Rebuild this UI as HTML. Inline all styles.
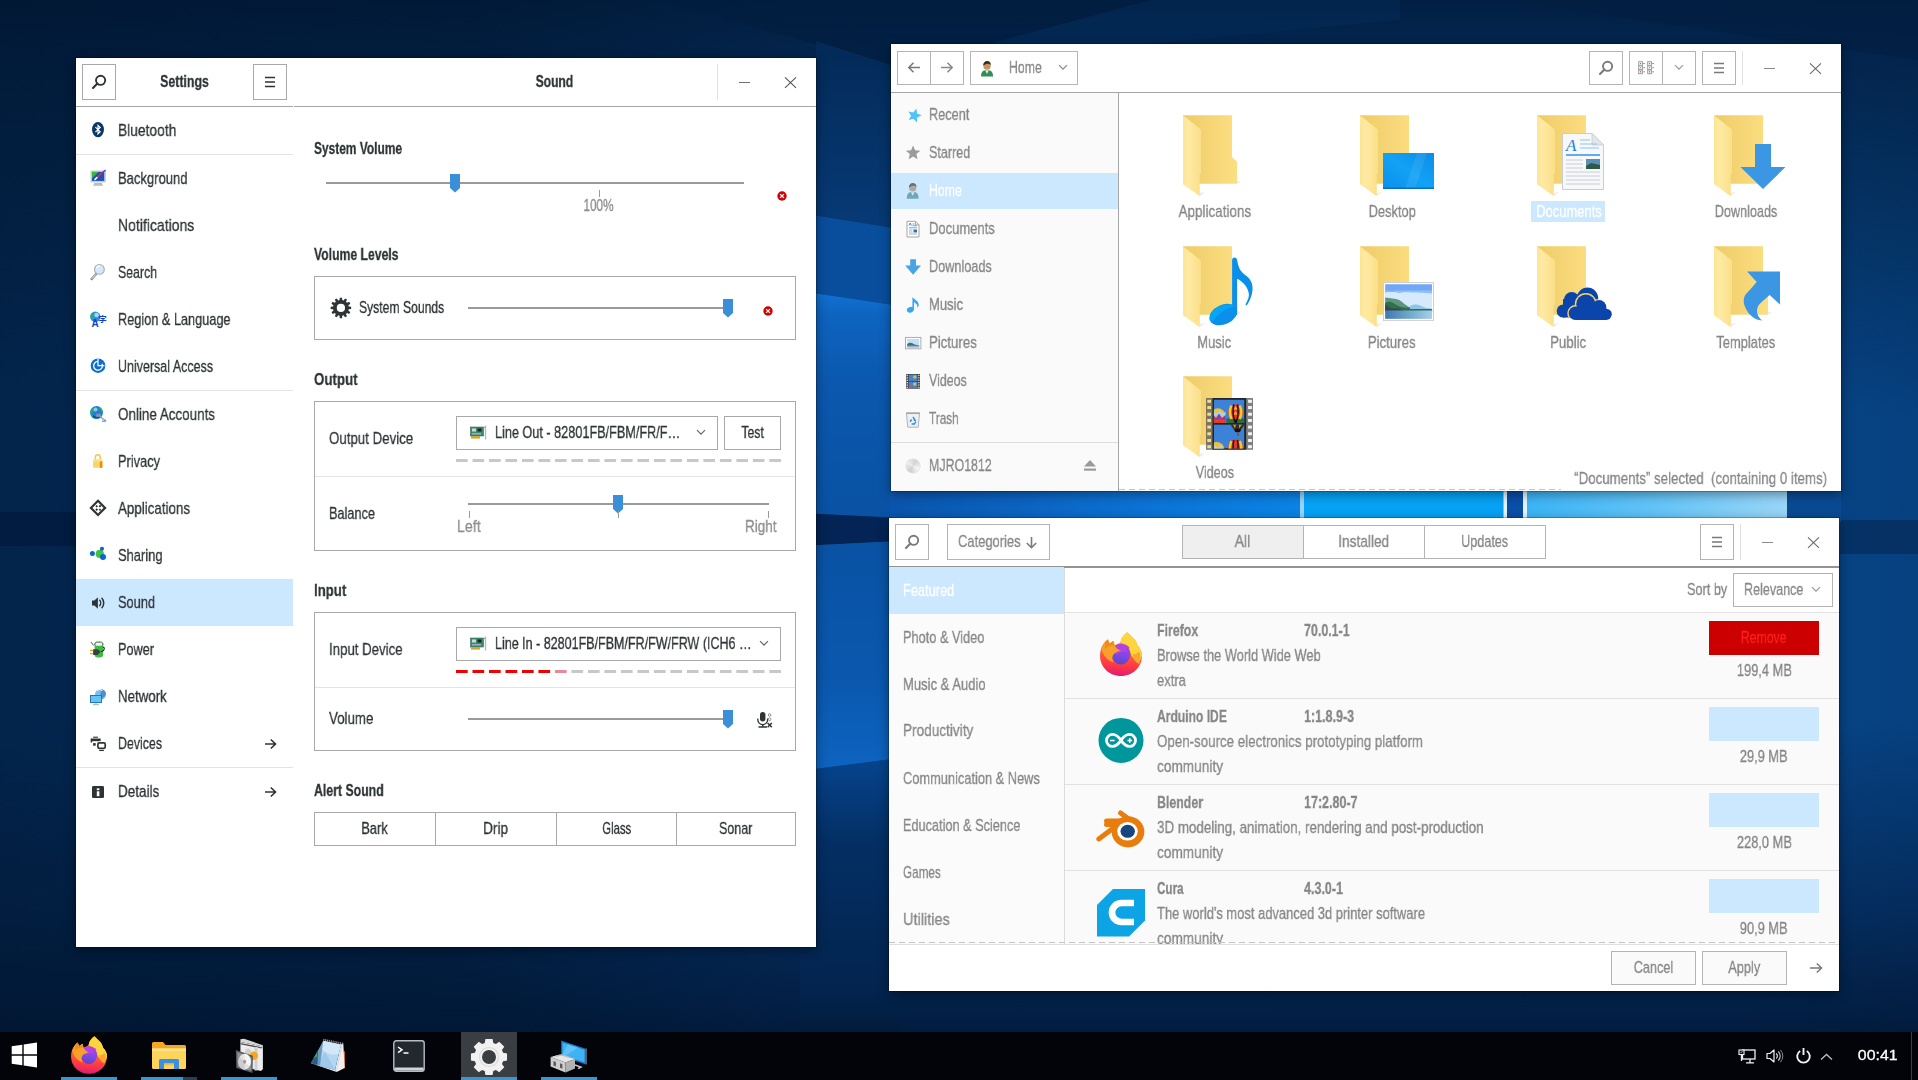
<!DOCTYPE html>
<html><head><meta charset="utf-8"><title>Desktop</title>
<style>
html,body{margin:0;padding:0;}
body{width:1918px;height:1080px;overflow:hidden;position:relative;font-family:"Liberation Sans",sans-serif;
background:#04244a;}
div,svg,span.t{position:absolute;box-sizing:border-box;}
span.t{will-change:transform;-webkit-text-stroke:.3px;white-space:pre;line-height:20px;display:block;}
.win{background:#fff;box-shadow:0 0 0 1px rgba(0,0,0,.22),0 3px 11px rgba(0,0,0,.42);}
.btn{border:1px solid #a9a9a9;background:#fff;}
.btng{border:1px solid #b4b4b4;background:#fff;}
.hl{background:#cce8ff;}
</style></head><body>

<svg style="left:0;top:0" width="1918" height="1032" viewBox="0 0 1918 1032"><defs><linearGradient id="wv" x1="0" y1="0" x2="0" y2="1"><stop offset="0" stop-color="#021f43"/><stop offset=".05" stop-color="#03264f"/><stop offset=".2" stop-color="#043466"/><stop offset=".4" stop-color="#07468a"/><stop offset=".7" stop-color="#07468a"/><stop offset=".88" stop-color="#042f62"/><stop offset="1" stop-color="#021c3f"/></linearGradient><linearGradient id="wl" x1="0" y1="0" x2="1" y2="0"><stop offset="0" stop-color="#01152f" stop-opacity=".68"/><stop offset=".25" stop-color="#01152f" stop-opacity=".56"/><stop offset=".45" stop-color="#01152f" stop-opacity="0"/><stop offset=".9" stop-color="#01152f" stop-opacity="0"/><stop offset="1" stop-color="#01152f" stop-opacity=".12"/></linearGradient><linearGradient id="g1" x1="0" y1="0" x2="0" y2="1"><stop offset="0" stop-color="#1272d4"/><stop offset=".1" stop-color="#0e64c0"/><stop offset=".4" stop-color="#0b58ae"/><stop offset="1" stop-color="#0952a4"/></linearGradient><linearGradient id="g2" x1="0" y1="0" x2="0" y2="1"><stop offset="0" stop-color="#0952a4"/><stop offset=".6" stop-color="#0a58ae"/><stop offset="1" stop-color="#0d64c0"/></linearGradient><linearGradient id="g3" x1="0" y1="0" x2="0" y2="1"><stop offset="0" stop-color="#06448e"/><stop offset=".3" stop-color="#042f64"/><stop offset=".85" stop-color="#03244e"/><stop offset="1" stop-color="#021b3b"/></linearGradient><linearGradient id="g0" x1="0" y1="0" x2="0" y2="1"><stop offset="0" stop-color="#032a57"/><stop offset="1" stop-color="#073a76"/></linearGradient><linearGradient id="s1" x1="0" y1="0" x2="1" y2="0"><stop offset="0" stop-color="#0a55ad"/><stop offset=".3" stop-color="#0b63c0"/><stop offset=".65" stop-color="#0c74d6"/><stop offset="1" stop-color="#0a84e6"/></linearGradient><linearGradient id="s2" x1="0" y1="0" x2="1" y2="0"><stop offset="0" stop-color="#3cb4f5"/><stop offset=".5" stop-color="#63c4f7"/><stop offset="1" stop-color="#9ad6f8"/></linearGradient></defs><rect width="1918" height="1032" fill="url(#wv)"/><rect width="1918" height="1032" fill="url(#wl)"/><path d="M660 0H1150L900 68z" fill="#021c3e" opacity=".6"/><path d="M1500 0H1918V60z" fill="#021c3e" opacity=".45"/><rect x="0" y="512" width="800" height="34" fill="#021a3c" opacity=".75"/><rect x="1840" y="520" width="78" height="34" fill="#03224a" opacity=".5"/><path d="M816 41L900 68V229L800 213V58H816z" fill="url(#g0)" /><path d="M900 68L1400 20V0H1150z" fill="#043062" opacity=".35"/><path d="M800 213L900 229V306L800 291z" fill="#094e9c"/><path d="M800 291L900 306V518L800 513z" fill="url(#g1)"/><path d="M800 513L900 518V541L800 546z" fill="#032454"/><path d="M800 546L900 541V758L800 771z" fill="url(#g2)"/><path d="M800 771L900 758V1032H800z" fill="url(#g3)"/><rect x="890" y="486" width="411" height="36" fill="url(#s1)"/><rect x="1300" y="486" width="4" height="36" fill="#9ad4f8"/><rect x="1304" y="486" width="200" height="36" fill="#06a2f5"/><rect x="1503.500" y="486" width="3.500" height="36" fill="#e4f5fe"/><rect x="1507" y="486" width="16" height="36" fill="#0a4fa8"/><rect x="1523" y="486" width="4" height="36" fill="#e4f5fe"/><rect x="1527" y="486" width="260" height="36" fill="url(#s2)"/><rect x="1787" y="486" width="54" height="36" fill="#0a4a92"/></svg>
<div class="win" style="left:76px;top:58px;width:740px;height:889px;"></div>
<div style="left:76px;top:106px;width:740px;height:1px;background:#a6a6a6"></div>
<div style="left:293px;top:106px;width:1px;height:1px;background:#fff"></div>
<div style="left:82px;top:64px;width:34px;height:36px;"></div>
<div class="btn" style="left:82px;top:64px;width:34px;height:36px"></div>
<svg style="left:91px;top:74px;" width="16" height="16" viewBox="0 0 16 16"><circle cx="9.6" cy="6.3" r="4.6" fill="none" stroke="#2e3436" stroke-width="1.9"/><path d="M6.4 9.6 L2 14" stroke="#2e3436" stroke-width="2.1" stroke-linecap="round"/></svg>
<span class="t" style="left:150.87px;top:71.50px;font-size:17px;color:#2e3436;transform:scaleX(0.7277);transform-origin:50% 50%;font-weight:bold;">Settings</span>
<div class="btn" style="left:253px;top:64px;width:34px;height:36px"></div>
<svg style="left:264px;top:76px;" width="12" height="12" viewBox="0 0 12 12"><path d="M1 1.5h10M1 6h10M1 10.5h10" stroke="#2e3436" stroke-width="1.7"/></svg>
<span class="t" style="left:528.06px;top:71.50px;font-size:17px;color:#2e3436;transform:scaleX(0.7093);transform-origin:50% 50%;font-weight:bold;">Sound</span>
<div style="left:717px;top:64px;width:1px;height:36px;background:#e0e0e0"></div>
<div style="left:739px;top:82px;width:11px;height:1px;background:#6f6f6f"></div>
<svg style="left:784px;top:76px;" width="13" height="13" viewBox="0 0 13 13"><path d="M1 1.400L12 11.800M12 1.400L1 11.800" stroke="#555" stroke-width="1.1"/></svg>
<div style="left:76px;top:579px;width:217px;height:47px;background:#cce8ff"></div>
<span class="t" style="left:118.00px;top:120.50px;font-size:17px;color:#2e3436;transform:scaleX(0.8109);transform-origin:0 50%;">Bluetooth</span>
<span class="t" style="left:118.00px;top:168.50px;font-size:17px;color:#2e3436;transform:scaleX(0.7661);transform-origin:0 50%;">Background</span>
<span class="t" style="left:118.00px;top:215.50px;font-size:17px;color:#2e3436;transform:scaleX(0.8235);transform-origin:0 50%;">Notifications</span>
<span class="t" style="left:118.00px;top:262.50px;font-size:17px;color:#2e3436;transform:scaleX(0.7241);transform-origin:0 50%;">Search</span>
<span class="t" style="left:118.00px;top:309.50px;font-size:17px;color:#2e3436;transform:scaleX(0.7486);transform-origin:0 50%;">Region &amp; Language</span>
<span class="t" style="left:118.00px;top:356.50px;font-size:17px;color:#2e3436;transform:scaleX(0.7340);transform-origin:0 50%;">Universal Access</span>
<span class="t" style="left:118.00px;top:404.50px;font-size:17px;color:#2e3436;transform:scaleX(0.7896);transform-origin:0 50%;">Online Accounts</span>
<span class="t" style="left:118.00px;top:451.50px;font-size:17px;color:#2e3436;transform:scaleX(0.7536);transform-origin:0 50%;">Privacy</span>
<span class="t" style="left:118.00px;top:498.50px;font-size:17px;color:#2e3436;transform:scaleX(0.7855);transform-origin:0 50%;">Applications</span>
<span class="t" style="left:118.00px;top:545.50px;font-size:17px;color:#2e3436;transform:scaleX(0.7595);transform-origin:0 50%;">Sharing</span>
<span class="t" style="left:118.00px;top:592.50px;font-size:17px;color:#2e3436;transform:scaleX(0.7527);transform-origin:0 50%;">Sound</span>
<span class="t" style="left:118.00px;top:639.50px;font-size:17px;color:#2e3436;transform:scaleX(0.7471);transform-origin:0 50%;">Power</span>
<span class="t" style="left:118.00px;top:686.50px;font-size:17px;color:#2e3436;transform:scaleX(0.7819);transform-origin:0 50%;">Network</span>
<span class="t" style="left:118.00px;top:733.50px;font-size:17px;color:#2e3436;transform:scaleX(0.7277);transform-origin:0 50%;">Devices</span>
<span class="t" style="left:118.00px;top:781.50px;font-size:17px;color:#2e3436;transform:scaleX(0.7939);transform-origin:0 50%;">Details</span>
<div style="left:76px;top:154px;width:217px;height:1px;background:#e3e3e3"></div>
<div style="left:76px;top:390px;width:217px;height:1px;background:#e3e3e3"></div>
<div style="left:76px;top:767px;width:217px;height:1px;background:#e3e3e3"></div>
<svg style="left:264px;top:737.5px;" width="13" height="12" viewBox="0 0 13 12"><path d="M1 6h10.5M6.8 1.5L11.5 6L6.8 10.5" fill="none" stroke="#2e3436" stroke-width="1.6"/></svg>
<svg style="left:264px;top:785.5px;" width="13" height="12" viewBox="0 0 13 12"><path d="M1 6h10.5M6.8 1.5L11.5 6L6.8 10.5" fill="none" stroke="#2e3436" stroke-width="1.6"/></svg>
<span class="t" style="left:314.00px;top:138.50px;font-size:17px;color:#2e3436;transform:scaleX(0.7021);transform-origin:0 50%;font-weight:bold;">System Volume</span>
<div style="left:326px;top:182px;width:418px;height:2px;background:#9a9a9a"></div>
<svg style="left:450px;top:174px;" width="10" height="19" viewBox="0 0 10 19"><path d="M0 0h10v14l-5 4.500L0 14z" fill="#3b8fd8"/></svg>
<div style="left:599px;top:190px;width:1px;height:7px;background:#9a9a9a"></div>
<span class="t" style="left:578.04px;top:195.50px;font-size:16px;color:#8c8c8c;transform:scaleX(0.7331);transform-origin:50% 50%;">100%</span>
<svg style="left:777px;top:190.5px;" width="10" height="10" viewBox="0 0 10 10"><circle cx="5" cy="5" r="4.7" fill="#d40000"/><path d="M3.1 3.1l3.8 3.8M6.9 3.1L3.1 6.9" stroke="#fff" stroke-width="1.3"/></svg>
<span class="t" style="left:314.00px;top:244.50px;font-size:17px;color:#2e3436;transform:scaleX(0.7174);transform-origin:0 50%;font-weight:bold;">Volume Levels</span>
<div class="btn" style="left:314px;top:276px;width:482px;height:64px"></div>
<svg style="left:329px;top:296px;" width="24" height="24" viewBox="0 0 24 24"><path d="M19.72 10.56L22.13 10.73L22.13 13.07L19.72 13.24L19.34 14.65L21.35 16.01L20.18 18.03L18.00 16.97L16.97 18.00L18.03 20.18L16.01 21.35L14.65 19.34L13.24 19.72L13.07 22.13L10.73 22.13L10.56 19.72L9.15 19.34L7.79 21.35L5.77 20.18L6.83 18.00L5.80 16.97L3.62 18.03L2.45 16.01L4.46 14.65L4.08 13.24L1.67 13.07L1.67 10.73L4.08 10.56L4.46 9.15L2.45 7.79L3.62 5.77L5.80 6.83L6.83 5.80L5.77 3.62L7.79 2.45L9.15 4.46L10.56 4.08L10.73 1.67L13.07 1.67L13.24 4.08L14.65 4.46L16.01 2.45L18.03 3.62L16.97 5.80L18.00 6.83L20.18 5.77L21.35 7.79L19.34 9.15ZM16.02 11.90A4.12 4.12 0 1 0 7.78 11.90A4.12 4.12 0 1 0 16.02 11.90Z" fill="#2e3436" fill-rule="evenodd"/></svg>
<span class="t" style="left:359.00px;top:297.50px;font-size:17px;color:#2e3436;transform:scaleX(0.7156);transform-origin:0 50%;">System Sounds</span>
<div style="left:468px;top:307px;width:256px;height:2px;background:#9a9a9a"></div>
<svg style="left:723px;top:299px;" width="10" height="19" viewBox="0 0 10 19"><path d="M0 0h10v14l-5 4.500L0 14z" fill="#3b8fd8"/></svg>
<svg style="left:762.5px;top:306.3px;" width="10" height="10" viewBox="0 0 10 10"><circle cx="5" cy="5" r="4.7" fill="#d40000"/><path d="M3.1 3.1l3.8 3.8M6.9 3.1L3.1 6.9" stroke="#fff" stroke-width="1.3"/></svg>
<span class="t" style="left:314.00px;top:369.50px;font-size:17px;color:#2e3436;transform:scaleX(0.7829);transform-origin:0 50%;font-weight:bold;">Output</span>
<div class="btn" style="left:314px;top:401px;width:482px;height:150px"></div>
<div style="left:315px;top:476px;width:480px;height:1px;background:#e3e3e3"></div>
<span class="t" style="left:329.00px;top:428.50px;font-size:17px;color:#2e3436;transform:scaleX(0.7817);transform-origin:0 50%;">Output Device</span>
<div class="btn" style="left:456px;top:416px;width:262px;height:34px"></div>
<div class="btn" style="left:724px;top:416px;width:57px;height:34px"></div>
<svg style="left:470px;top:425px;" width="17" height="16" viewBox="0 0 17 16"><rect x="0.5" y="2" width="13" height="9" fill="#3d8a72" stroke="#2f6b58" stroke-width=".6"/><rect x="2" y="3.5" width="4" height="3" fill="#cfd8d4"/><rect x="7.5" y="3.5" width="4" height="3" fill="#222"/><rect x="2" y="8" width="9" height="1.6" fill="#9ab"/><rect x="1" y="11" width="9" height="2.6" fill="#d6a432"/><path d="M15.5 0.5v14" stroke="#bbb" stroke-width="1.4"/><path d="M13.5 3l2-1" stroke="#999" stroke-width="1"/></svg>
<span class="t" style="left:495.30px;top:422.50px;font-size:17px;color:#2e3436;transform:scaleX(0.7454);transform-origin:0 50%;">Line Out - 82801FB/FBM/FR/F…</span>
<svg style="left:696px;top:428.5px;" width="10" height="7" viewBox="0 0 10 7"><path d="M1 1.2L5 5.2L9 1.2" fill="none" stroke="#666" stroke-width="1.2"/></svg>
<span class="t" style="left:736.91px;top:422.50px;font-size:17px;color:#2e3436;transform:scaleX(0.7185);transform-origin:50% 50%;">Test</span>
<svg style="left:456px;top:459px;" width="325" height="3" viewBox="0 0 325 3"><rect x="0.00" y="0" width="11.69" height="3" fill="#c8c8c8"/><rect x="16.49" y="0" width="11.69" height="3" fill="#c8c8c8"/><rect x="32.98" y="0" width="11.69" height="3" fill="#c8c8c8"/><rect x="49.47" y="0" width="11.69" height="3" fill="#c8c8c8"/><rect x="65.96" y="0" width="11.69" height="3" fill="#c8c8c8"/><rect x="82.45" y="0" width="11.69" height="3" fill="#c8c8c8"/><rect x="98.94" y="0" width="11.69" height="3" fill="#c8c8c8"/><rect x="115.43" y="0" width="11.69" height="3" fill="#c8c8c8"/><rect x="131.92" y="0" width="11.69" height="3" fill="#c8c8c8"/><rect x="148.41" y="0" width="11.69" height="3" fill="#c8c8c8"/><rect x="164.90" y="0" width="11.69" height="3" fill="#c8c8c8"/><rect x="181.39" y="0" width="11.69" height="3" fill="#c8c8c8"/><rect x="197.88" y="0" width="11.69" height="3" fill="#c8c8c8"/><rect x="214.37" y="0" width="11.69" height="3" fill="#c8c8c8"/><rect x="230.86" y="0" width="11.69" height="3" fill="#c8c8c8"/><rect x="247.35" y="0" width="11.69" height="3" fill="#c8c8c8"/><rect x="263.84" y="0" width="11.69" height="3" fill="#c8c8c8"/><rect x="280.33" y="0" width="11.69" height="3" fill="#c8c8c8"/><rect x="296.82" y="0" width="11.69" height="3" fill="#c8c8c8"/><rect x="313.31" y="0" width="11.69" height="3" fill="#c8c8c8"/></svg>
<span class="t" style="left:329.00px;top:503.50px;font-size:17px;color:#2e3436;transform:scaleX(0.7488);transform-origin:0 50%;">Balance</span>
<div style="left:468px;top:503px;width:301px;height:2px;background:#9a9a9a"></div>
<svg style="left:613px;top:495px;" width="10" height="19" viewBox="0 0 10 19"><path d="M0 0h10v14l-5 4.500L0 14z" fill="#3b8fd8"/></svg>
<div style="left:469px;top:511px;width:1px;height:7px;background:#9a9a9a"></div>
<div style="left:618px;top:511px;width:1px;height:7px;background:#9a9a9a"></div>
<div style="left:768px;top:511px;width:1px;height:7px;background:#9a9a9a"></div>
<span class="t" style="left:457.40px;top:516.50px;font-size:17px;color:#8c8c8c;transform:scaleX(0.8324);transform-origin:0 50%;">Left</span>
<span class="t" style="left:744.50px;top:516.50px;font-size:17px;color:#8c8c8c;transform:scaleX(0.7938);transform-origin:0 50%;">Right</span>
<span class="t" style="left:314.00px;top:580.50px;font-size:17px;color:#2e3436;transform:scaleX(0.7753);transform-origin:0 50%;font-weight:bold;">Input</span>
<div class="btn" style="left:314px;top:612px;width:482px;height:139px"></div>
<div style="left:315px;top:687px;width:480px;height:1px;background:#e3e3e3"></div>
<span class="t" style="left:329.00px;top:639.50px;font-size:17px;color:#2e3436;transform:scaleX(0.7789);transform-origin:0 50%;">Input Device</span>
<div class="btn" style="left:456px;top:627px;width:325px;height:34px"></div>
<svg style="left:470px;top:636px;" width="17" height="16" viewBox="0 0 17 16"><rect x="0.5" y="2" width="13" height="9" fill="#3d8a72" stroke="#2f6b58" stroke-width=".6"/><rect x="2" y="3.5" width="4" height="3" fill="#cfd8d4"/><rect x="7.5" y="3.5" width="4" height="3" fill="#222"/><rect x="2" y="8" width="9" height="1.6" fill="#9ab"/><rect x="1" y="11" width="9" height="2.6" fill="#d6a432"/><path d="M15.5 0.5v14" stroke="#bbb" stroke-width="1.4"/><path d="M13.5 3l2-1" stroke="#999" stroke-width="1"/></svg>
<span class="t" style="left:495.00px;top:633.50px;font-size:17px;color:#2e3436;transform:scaleX(0.7366);transform-origin:0 50%;">Line In - 82801FB/FBM/FR/FW/FRW (ICH6 …</span>
<svg style="left:759px;top:639.5px;" width="10" height="7" viewBox="0 0 10 7"><path d="M1 1.2L5 5.2L9 1.2" fill="none" stroke="#666" stroke-width="1.2"/></svg>
<svg style="left:456px;top:670px;" width="325" height="3" viewBox="0 0 325 3"><rect x="0.00" y="0" width="11.69" height="3" fill="#f00000"/><rect x="16.49" y="0" width="11.69" height="3" fill="#f00000"/><rect x="32.98" y="0" width="11.69" height="3" fill="#f00000"/><rect x="49.47" y="0" width="11.69" height="3" fill="#f00000"/><rect x="65.96" y="0" width="11.69" height="3" fill="#f00000"/><rect x="82.45" y="0" width="11.69" height="3" fill="#f00000"/><rect x="98.94" y="0" width="11.69" height="3" fill="#e8889a"/><rect x="115.43" y="0" width="11.69" height="3" fill="#c8c8c8"/><rect x="131.92" y="0" width="11.69" height="3" fill="#c8c8c8"/><rect x="148.41" y="0" width="11.69" height="3" fill="#c8c8c8"/><rect x="164.90" y="0" width="11.69" height="3" fill="#c8c8c8"/><rect x="181.39" y="0" width="11.69" height="3" fill="#c8c8c8"/><rect x="197.88" y="0" width="11.69" height="3" fill="#c8c8c8"/><rect x="214.37" y="0" width="11.69" height="3" fill="#c8c8c8"/><rect x="230.86" y="0" width="11.69" height="3" fill="#c8c8c8"/><rect x="247.35" y="0" width="11.69" height="3" fill="#c8c8c8"/><rect x="263.84" y="0" width="11.69" height="3" fill="#c8c8c8"/><rect x="280.33" y="0" width="11.69" height="3" fill="#c8c8c8"/><rect x="296.82" y="0" width="11.69" height="3" fill="#c8c8c8"/><rect x="313.31" y="0" width="11.69" height="3" fill="#c8c8c8"/></svg>
<span class="t" style="left:329.00px;top:708.50px;font-size:17px;color:#2e3436;transform:scaleX(0.7831);transform-origin:0 50%;">Volume</span>
<div style="left:468px;top:718px;width:260px;height:2px;background:#9a9a9a"></div>
<svg style="left:723px;top:710px;" width="10" height="19" viewBox="0 0 10 19"><path d="M0 0h10v14l-5 4.500L0 14z" fill="#3b8fd8"/></svg>
<svg style="left:756px;top:711px;" width="18" height="18" viewBox="0 0 18 18"><rect x="4" y="1" width="5.4" height="9.5" rx="2.7" fill="#2e3436"/><path d="M1.8 7.5v1.2a4.9 4.9 0 0 0 9.8 0V7.5" fill="none" stroke="#2e3436" stroke-width="1.3"/><path d="M6.7 13.6v2M2.5 16h8.5" stroke="#2e3436" stroke-width="1.5"/><circle cx="13.6" cy="4" r="1.3" fill="none" stroke="#777" stroke-width=".8"/><circle cx="13.6" cy="8.3" r="1.3" fill="none" stroke="#777" stroke-width=".8"/><path d="M11.6 12l4.2 4.2M15.8 12l-4.2 4.2" stroke="#2e3436" stroke-width="1.5"/></svg>
<span class="t" style="left:314.00px;top:780.50px;font-size:17px;color:#2e3436;transform:scaleX(0.7236);transform-origin:0 50%;font-weight:bold;">Alert Sound</span>
<div class="btn" style="left:314px;top:812px;width:482px;height:34px"></div>
<div style="left:435px;top:812px;width:1px;height:34px;background:#a9a9a9"></div>
<div style="left:556px;top:812px;width:1px;height:34px;background:#a9a9a9"></div>
<div style="left:676px;top:812px;width:1px;height:34px;background:#a9a9a9"></div>
<span class="t" style="left:357.12px;top:818.50px;font-size:17px;color:#2e3436;transform:scaleX(0.7553);transform-origin:50% 50%;">Bark</span>
<span class="t" style="left:480.02px;top:818.50px;font-size:17px;color:#2e3436;transform:scaleX(0.8021);transform-origin:50% 50%;">Drip</span>
<span class="t" style="left:595.07px;top:818.50px;font-size:17px;color:#2e3436;transform:scaleX(0.6628);transform-origin:50% 50%;">Glass</span>
<span class="t" style="left:713.22px;top:818.50px;font-size:17px;color:#2e3436;transform:scaleX(0.7363);transform-origin:50% 50%;">Sonar</span>
<svg style="left:88px;top:120px;overflow:visible;" width="22" height="22" viewBox="0 0 22 22"><ellipse cx="10" cy="9.6" rx="6" ry="7.6" fill="#0b3768"/><path d="M7.4 7.1L12.2 11.7L10 13.9V5.3L12.2 7.5L7.4 12.1" fill="none" stroke="#fff" stroke-width="1.15"/></svg>
<svg style="left:88px;top:168px;overflow:visible;" width="22" height="22" viewBox="0 0 22 22"><rect x="2.5" y="2.6" width="15.4" height="12" rx=".8" fill="#c9ccd0"/><rect x="4" y="3.9" width="12.2" height="9" fill="#1c4fc0"/><path d="M4 3.9h6.5L4 10.5z" fill="#36b83c"/><path d="M6.3 15h7.6l1.2 2.7H5.1z" fill="#b9bcc0"/><path d="M6.5 11.8L9.5 9" stroke="#fff" stroke-width="1.6"/><path d="M9.5 9L14 5" stroke="#f0281e" stroke-width="1.8"/><path d="M14 5L17.6 2" stroke="#5a3fd0" stroke-width="1.6"/></svg>
<svg style="left:88px;top:262px;overflow:visible;" width="22" height="22" viewBox="0 0 22 22"><path d="M7.9 12.2L3.6 17.1" stroke="#8d8d8d" stroke-width="2.4" stroke-linecap="round"/><path d="M7.6 12.6L4 16.7" stroke="#f4f4f4" stroke-width=".9"/><circle cx="11.4" cy="7.4" r="4.9" fill="#d3e8fb" stroke="#a9adb3" stroke-width="1.1"/><path d="M8.5 6.3a3.2 3.2 0 0 1 3.6-2.2" stroke="#fff" stroke-width="1.3" fill="none"/></svg>
<svg style="left:88px;top:309px;overflow:visible;" width="22" height="22" viewBox="0 0 22 22"><circle cx="7.3" cy="7.7" r="5.2" fill="#2a8fe8"/><path d="M3.5 4.6c1.5-.4 2.6.6 2.2 2.2c-.4 1.6-1.8 1.4-2.5 3.2A5.2 5.2 0 0 1 3.5 4.6z" fill="#2fb52f"/><circle cx="8.6" cy="6" r="2.3" fill="#bfe2fb" opacity=".85"/><text x="10.4" y="13.3" font-family="'Noto Sans CJK SC','Liberation Sans',sans-serif" font-weight="bold" font-size="8.2" fill="#173fc4">字</text><text x="3.6" y="18" font-family="'Liberation Sans',sans-serif" font-weight="bold" font-size="10" fill="#173fc4">A</text></svg>
<svg style="left:88px;top:356px;overflow:visible;" width="22" height="22" viewBox="0 0 22 22"><circle cx="10" cy="9.7" r="7.3" fill="#0b6cd2"/><path d="M13.9 7.7A4.4 4.4 0 1 1 10 5.4" fill="none" stroke="#fff" stroke-width="1.3"/><path d="M10 2.4v7.3h6.4" fill="none" stroke="#fff" stroke-width="1.2"/></svg>
<svg style="left:88px;top:404px;overflow:visible;" width="22" height="22" viewBox="0 0 22 22"><circle cx="8.5" cy="8.6" r="6.5" fill="#1f7fe0"/><path d="M3 5.5c1.8-1.6 3.3-.6 2.8 1.3c-.3 1.5-2 1.6-1.8 3.6c.2 1.4 1.600 1.700 1.7 3.100A6.500 6.500 0 0 1 3 5.500z" fill="#2db52d"/><path d="M11.500 3c1.200.7 2.800 2.400 3.300 4.300c-1.300.8-2.200-.300-2.700-1.600c-.400-1.100-.900-1.700-.600-2.700z" fill="#2db52d"/><circle cx="7.500" cy="5.500" r="2" fill="#bfe2fb" opacity=".7"/><path d="M5 12c2 1.500 5 1.800 7 .600" stroke="#0a2f6a" stroke-width="1.600" fill="none" opacity=".6"/><rect x="8.300" y="9.800" width="4.500" height="3" fill="#8e959c"/><path d="M12 12.500l3 2.500c1.500 1 2.500.800 2.800 2.500" stroke="#8aa0b8" stroke-width="1.500" fill="none"/><path d="M14 17.200h3.500" stroke="#3a8fd0" stroke-width="1.100"/></svg>
<svg style="left:88px;top:451px;overflow:visible;" width="22" height="22" viewBox="0 0 22 22"><path d="M7.400 9.700V6.200a2.400 2.400 0 0 1 4.800 0v3.500" fill="none" stroke="#f2c84e" stroke-width="1.500"/><rect x="5.100" y="8.600" width="9.300" height="8.200" rx=".8" fill="#f7d669"/><rect x="11.800" y="10" width="2.600" height="6.800" fill="#f08a14"/><rect x="5.100" y="8.600" width="9.300" height="1.800" fill="#fbe38e"/></svg>
<svg style="left:88px;top:498px;overflow:visible;" width="22" height="22" viewBox="0 0 22 22"><path d="M10 2.800L17.100 9.900L10 17L2.900 9.900z" fill="#fff" stroke="#2e3436" stroke-width="2.200" stroke-linejoin="miter"/><path d="M7.400 8.300l1.300-1.300 1.300 1.300-1.300 1.300zM10.600 8.200l1.400-1.400 1.400 1.400-1.400 1.400zM7.300 11.600l1.400-1.400 1.400 1.400-1.400 1.400zM10.700 11.700l1.300-1.300 1.300 1.300-1.300 1.300z" fill="#2e3436"/></svg>
<svg style="left:88px;top:545px;overflow:visible;" width="22" height="22" viewBox="0 0 22 22"><circle cx="11.800" cy="8.900" r="4.100" fill="#3fc241"/><circle cx="4.400" cy="8.400" r="2.500" fill="#0c66c8"/><circle cx="14" cy="3.700" r="2.050" fill="#0c66c8"/><circle cx="15" cy="11.900" r="3" fill="#0c66c8"/></svg>
<svg style="left:88px;top:592px;overflow:visible;" width="22" height="22" viewBox="0 0 22 22"><path d="M4 8.400h2.400L9.900 5.200v11.500L6.400 13.500H4z" fill="#2e3436"/><path d="M11.400 7.800a4.500 4.500 0 0 1 0 6.300" fill="none" stroke="#2e3436" stroke-width="1.500"/><path d="M13.600 5.800a7.300 7.300 0 0 1 0 10.300" fill="none" stroke="#2e3436" stroke-width="1.500"/></svg>
<svg style="left:88px;top:639px;overflow:visible;" width="22" height="22" viewBox="0 0 22 22"><rect x="6.600" y="3.200" width="8.500" height="15.400" rx="3" fill="#3dbb45"/><rect x="7.400" y="3.600" width="6.900" height="3.200" rx="1.600" fill="#eef3ee"/><path d="M6.600 6c0-2 1.200-3 2.500-3h3.500c1.500 0 2.500 1 2.500 3" fill="none" stroke="#444" stroke-width=".8"/><path d="M3 3l2.600 3.500" stroke="#444" stroke-width=".9"/><path d="M14.800 8c2.200 0 2.200 4-1.800 4.800" fill="none" stroke="#222" stroke-width="1.100"/><path d="M5.100 10.200h4.500l3 2.600-3 3.300H5.100z" fill="#3a3d42"/><path d="M2 11.500h3.100M2 14.700h3.100" stroke="#f2a51c" stroke-width="1.300"/></svg>
<svg style="left:88px;top:686px;overflow:visible;" width="22" height="22" viewBox="0 0 22 22"><circle cx="12.500" cy="8.400" r="5.500" fill="#7cc0ec"/><path d="M12.500 2.900a5.500 5.500 0 0 1 5.500 5.500c-2 3-4 4-5.500 5.500z" fill="#3f7fc0" opacity=".75"/><path d="M9 4.500c1.500-1.600 4-1.600 5 .3" stroke="#e4f4fd" stroke-width="1.400" fill="none"/><rect x="2" y="9" width="11.900" height="8" fill="#1f6fb8"/><rect x="2.900" y="9.900" width="10.100" height="6.200" fill="#63c4f6"/><path d="M5 18.700h6" stroke="#9aa" stroke-width=".9"/><path d="M8 17v1.500" stroke="#9aa" stroke-width="1"/></svg>
<svg style="left:88px;top:733px;overflow:visible;" width="22" height="22" viewBox="0 0 22 22"><path d="M5.100 4.200h4.800" stroke="#2e3436" stroke-width="1.100"/><path d="M3.400 9.500V6.200h8.500v1.700" fill="none" stroke="#2e3436" stroke-width="1.500"/><rect x="3" y="6" width="8.900" height="2.200" fill="#2e3436"/><rect x="5.100" y="10.100" width="2.600" height="2.600" fill="#2e3436"/><rect x="9.900" y="9.900" width="7.300" height="5.400" rx="1.200" fill="none" stroke="#2e3436" stroke-width="1.700"/><path d="M11.200 17.500h4.700" stroke="#2e3436" stroke-width="1.100"/></svg>
<svg style="left:88px;top:781px;overflow:visible;" width="22" height="22" viewBox="0 0 22 22"><rect x="4" y="5.100" width="12" height="12" rx="1.300" fill="#2e3436"/><rect x="8.800" y="7.300" width="2.600" height="1.900" fill="#fff"/><rect x="8.800" y="10.300" width="2.600" height="4.900" fill="#fff"/></svg>
<div class="win" style="left:891px;top:44px;width:950px;height:447px;"></div>
<div style="left:891px;top:92px;width:950px;height:1px;background:#a6a6a6"></div>
<div style="left:891px;top:93px;width:227px;height:398px;background:#fafafa"></div>
<div style="left:1118px;top:93px;width:1px;height:398px;background:#a6a6a6"></div>
<div class="btng" style="left:897px;top:51px;width:67px;height:34px"></div>
<div style="left:930px;top:51px;width:1px;height:34px;background:#b4b4b4"></div>
<svg style="left:907px;top:61px;" width="14" height="13" viewBox="0 0 14 13"><path d="M13 6.500H2M6.500 1.800L1.800 6.500L6.500 11.200" fill="none" stroke="#777" stroke-width="1.500"/></svg>
<svg style="left:940px;top:61px;" width="14" height="13" viewBox="0 0 14 13"><path d="M1 6.500H12M7.500 1.800L12.200 6.500L7.500 11.200" fill="none" stroke="#888" stroke-width="1.500"/></svg>
<div class="btng" style="left:970px;top:51px;width:108px;height:34px"></div>
<svg style="left:980px;top:60px;opacity:1;" width="14" height="17" viewBox="0 0 14 17"><path d="M1 16.500c0-4.500 2-6.500 6-6.500s6 2 6 6.500z" fill="#2f8f5a"/><path d="M5.200 10.300L7 14l1.800-3.700z" fill="#e8f0ea"/><circle cx="7" cy="6" r="3.700" fill="#c9925e"/><path d="M3.200 5.500c0-3 1.800-4.500 3.800-4.500s4 1.200 3.800 4.200c-1.500-1.500-3.500-2.200-7.600.3z" fill="#3a2a1c"/></svg>
<span class="t" style="left:1009.25px;top:57.50px;font-size:17px;color:#868686;transform:scaleX(0.7222);transform-origin:0 50%;">Home</span>
<svg style="left:1058px;top:64px;" width="10" height="7" viewBox="0 0 10 7"><path d="M1 1.200L5 5.200L9 1.200" fill="none" stroke="#888" stroke-width="1.200"/></svg>
<div class="btng" style="left:1589px;top:51px;width:34px;height:34px"></div>
<svg style="left:1598px;top:60px;" width="16" height="16" viewBox="0 0 16 16"><circle cx="9.600" cy="6.300" r="4.600" fill="none" stroke="#7a7a7a" stroke-width="1.900"/><path d="M6.400 9.600L2 14" stroke="#7a7a7a" stroke-width="2.100" stroke-linecap="round"/></svg>
<div class="btng" style="left:1629px;top:51px;width:67px;height:34px"></div>
<div style="left:1662px;top:51px;width:1px;height:34px;background:#b4b4b4"></div>
<svg style="left:1637px;top:60px;" width="18" height="15" viewBox="0 0 18 15"><rect x="1.7" y="1.7" width="3.700" height="3.700" fill="#fff" stroke="#9c9c9c" stroke-width="1"/><circle cx="3.55" cy="3.55" r=".650" fill="#3a8a5a"/><path d="M6.1000000000000005 3.55h1.900" stroke="#8a8a8a" stroke-width=".900"/><rect x="1.7" y="5.85" width="3.700" height="3.700" fill="#fff" stroke="#9c9c9c" stroke-width="1"/><circle cx="3.55" cy="7.699999999999999" r=".650" fill="#5a9aff"/><path d="M6.1000000000000005 7.699999999999999h1.900" stroke="#8a8a8a" stroke-width=".900"/><rect x="1.7" y="10.0" width="3.700" height="3.700" fill="#fff" stroke="#9c9c9c" stroke-width="1"/><circle cx="3.55" cy="11.85" r=".650" fill="#e00000"/><path d="M6.1000000000000005 11.85h1.900" stroke="#8a8a8a" stroke-width=".900"/><rect x="10.7" y="1.7" width="3.700" height="3.700" fill="#fff" stroke="#9c9c9c" stroke-width="1"/><circle cx="12.549999999999999" cy="3.55" r=".650" fill="#3a8a5a"/><path d="M15.1 3.55h1.900" stroke="#8a8a8a" stroke-width=".900"/><rect x="10.7" y="5.85" width="3.700" height="3.700" fill="#fff" stroke="#9c9c9c" stroke-width="1"/><circle cx="12.549999999999999" cy="7.699999999999999" r=".650" fill="#5a9aff"/><path d="M15.1 7.699999999999999h1.900" stroke="#8a8a8a" stroke-width=".900"/><rect x="10.7" y="10.0" width="3.700" height="3.700" fill="#fff" stroke="#9c9c9c" stroke-width="1"/><circle cx="12.549999999999999" cy="11.85" r=".650" fill="#e00000"/><path d="M15.1 11.85h1.900" stroke="#8a8a8a" stroke-width=".900"/></svg>
<svg style="left:1674px;top:64px;" width="10" height="7" viewBox="0 0 10 7"><path d="M1 1.200L5 5.200L9 1.200" fill="none" stroke="#999" stroke-width="1.200"/></svg>
<div class="btng" style="left:1702px;top:51px;width:34px;height:34px"></div>
<svg style="left:1713px;top:62px;" width="12" height="12" viewBox="0 0 12 12"><path d="M1 1.500h10M1 6h10M1 10.500h10" stroke="#7a7a7a" stroke-width="1.700"/></svg>
<div style="left:1742px;top:51px;width:1px;height:34px;background:#e0e0e0"></div>
<div style="left:1764px;top:68px;width:11px;height:1px;background:#8a8a8a"></div>
<svg style="left:1809px;top:62px;" width="13" height="13" viewBox="0 0 13 13"><path d="M1 1.400L12 11.800M12 1.400L1 11.800" stroke="#6a6a6a" stroke-width="1.100"/></svg>
<div style="left:891px;top:173px;width:227px;height:36px;background:#cce8ff"></div>
<span class="t" style="left:929.25px;top:104.50px;font-size:17px;color:#868686;transform:scaleX(0.7473);transform-origin:0 50%;">Recent</span>
<span class="t" style="left:929.25px;top:142.50px;font-size:17px;color:#868686;transform:scaleX(0.7400);transform-origin:0 50%;">Starred</span>
<span class="t" style="left:929.25px;top:180.50px;font-size:17px;color:#fff;transform:scaleX(0.7222);transform-origin:0 50%;">Home</span>
<span class="t" style="left:929.25px;top:218.50px;font-size:17px;color:#868686;transform:scaleX(0.7648);transform-origin:0 50%;">Documents</span>
<span class="t" style="left:929.25px;top:256.50px;font-size:17px;color:#868686;transform:scaleX(0.7461);transform-origin:0 50%;">Downloads</span>
<span class="t" style="left:929.25px;top:294.50px;font-size:17px;color:#868686;transform:scaleX(0.7659);transform-origin:0 50%;">Music</span>
<span class="t" style="left:929.25px;top:332.50px;font-size:17px;color:#868686;transform:scaleX(0.7776);transform-origin:0 50%;">Pictures</span>
<span class="t" style="left:929.25px;top:370.50px;font-size:17px;color:#868686;transform:scaleX(0.7306);transform-origin:0 50%;">Videos</span>
<span class="t" style="left:929.25px;top:408.50px;font-size:17px;color:#868686;transform:scaleX(0.6947);transform-origin:0 50%;">Trash</span>
<div style="left:891px;top:442px;width:227px;height:1px;background:#dedede"></div>
<span class="t" style="left:929.25px;top:455.50px;font-size:17px;color:#868686;transform:scaleX(0.7299);transform-origin:0 50%;">MJRO1812</span>
<svg style="left:1083px;top:459px;" width="14" height="13" viewBox="0 0 14 13"><path d="M7 1L13 7.500H1z" fill="#9a9a9a"/><rect x="1" y="9.500" width="12" height="2.200" fill="#9a9a9a"/></svg>
<span class="t" style="left:1504.29px;top:468.50px;font-size:17px;color:#868686;transform:scaleX(0.7830);transform-origin:100% 50%;">“Documents” selected  (containing 0 items)</span>
<div style="left:1119px;top:489px;width:442px;height:1px;background:repeating-linear-gradient(90deg,#c4c4c4 0 6px,transparent 6px 10px)"></div>
<svg style="left:904px;top:105px;overflow:visible;" width="20" height="20" viewBox="0 0 20 20"><polygon points="12.41,3.58 12.99,8.58 17.70,10.35 13.12,12.44 12.90,17.46 9.49,13.76 4.65,15.09 7.12,10.71 4.35,6.52 9.28,7.51" fill="#4fc3f7"/></svg>
<svg style="left:904px;top:143px;overflow:visible;" width="20" height="20" viewBox="0 0 20 20"><polygon points="9.10,2.40 11.11,7.23 16.33,7.65 12.35,11.06 13.57,16.15 9.10,13.42 4.63,16.15 5.85,11.06 1.87,7.65 7.09,7.23" fill="#9b9b9b"/></svg>
<svg style="left:904px;top:180px;overflow:visible;" width="20" height="20" viewBox="0 0 20 20"><path d="M2.800 18.700c0-4.800 1.500-6.600 5.900-6.600s5.900 1.800 5.900 6.600z" fill="#6fa9b8"/><path d="M7 12.300l1.700 3.500 1.700-3.500z" fill="#dde8ec"/><circle cx="8.700" cy="8" r="3.600" fill="#a9a9a9"/><path d="M4.900 7.500c0-3 1.800-4.600 3.800-4.600s4 1.300 3.800 4.300c-1.500-1.500-3.500-2.200-7.600.3z" fill="#6e6e6e"/></svg>
<svg style="left:904px;top:219px;overflow:visible;" width="20" height="20" viewBox="0 0 20 20"><path d="M3 2.300h8.500l3.500 3.500v12.200H3z" fill="#fff" stroke="#9a9a9a" stroke-width=".900"/><path d="M11.500 2.300v3.500h3.500" fill="none" stroke="#9a9a9a" stroke-width=".800"/><path d="M5 6.500l1.200-2.500 1.200 2.500" stroke="#2f7fd0" stroke-width=".900" fill="none"/><path d="M8.500 5h2M8.500 6.700h4.500M5 8.800h8" stroke="#4a9be0" stroke-width=".900"/><path d="M5 11h3.500M5 13h3.500M5 15h8" stroke="#999" stroke-width=".800"/><rect x="9.500" y="10.500" width="3.500" height="3" fill="#3b6ea5"/></svg>
<svg style="left:904px;top:257px;overflow:visible;" width="20" height="20" viewBox="0 0 20 20"><path d="M6.200 2.200h5.800v6.300h5L9.100 17.800L1.200 8.500h5z" fill="#4aa3e3"/></svg>
<svg style="left:904px;top:295px;overflow:visible;" width="20" height="20" viewBox="0 0 20 20"><ellipse cx="6.300" cy="14.800" rx="3.500" ry="2.800" fill="#35a8f0" transform="rotate(-20 6.300 14.800)"/><path d="M8.400 15V2.200c2.200 2.200 6.200 4 6.300 7.300c0 1.800-.600 2.600-1.400 3.600c.600-3.200-1.300-4.800-3.300-5.800v7.700z" fill="#35a8f0"/></svg>
<svg style="left:904px;top:335px;overflow:visible;" width="20" height="20" viewBox="0 0 20 20"><rect x="1.500" y="2.400" width="15.400" height="11.400" fill="#fff" stroke="#a4a4a4" stroke-width=".900"/><rect x="3.200" y="4" width="12" height="8.200" fill="#bfe0f7"/><path d="M3.200 9c3-2.500 5-1 7.500.500l4.500 1v1.700H3.200z" fill="#4d6a78"/><rect x="3.200" y="10.700" width="12" height="1.500" fill="#8fb6cf"/></svg>
<svg style="left:904px;top:372px;overflow:visible;" width="20" height="20" viewBox="0 0 20 20"><rect x="2.200" y="2" width="13.800" height="14.700" fill="#3e3e3e"/><rect x="4.700" y="2.600" width="8.800" height="6.400" fill="#3b86d8"/><rect x="4.700" y="9.700" width="8.800" height="6.400" fill="#3b86d8"/><circle cx="10.800" cy="5" r="1.800" fill="#f2b233"/><circle cx="10.800" cy="12.100" r="1.800" fill="#f2b233"/><path d="M4.700 8l2-2 2 2z" fill="#d9534f"/><path d="M4.700 15.100l2-2 2 2z" fill="#d9534f"/><rect x="2.700" y="2.8" width="1.300" height="1.300" fill="#ddd"/><rect x="14.200" y="2.8" width="1.300" height="1.300" fill="#ddd"/><rect x="2.700" y="5.2" width="1.300" height="1.300" fill="#ddd"/><rect x="14.200" y="5.2" width="1.300" height="1.300" fill="#ddd"/><rect x="2.700" y="7.6" width="1.300" height="1.300" fill="#ddd"/><rect x="14.200" y="7.6" width="1.300" height="1.300" fill="#ddd"/><rect x="2.700" y="10" width="1.300" height="1.300" fill="#ddd"/><rect x="14.200" y="10" width="1.300" height="1.300" fill="#ddd"/><rect x="2.700" y="12.4" width="1.300" height="1.300" fill="#ddd"/><rect x="14.200" y="12.4" width="1.300" height="1.300" fill="#ddd"/><rect x="2.700" y="14.8" width="1.300" height="1.300" fill="#ddd"/><rect x="14.200" y="14.8" width="1.300" height="1.300" fill="#ddd"/></svg>
<svg style="left:904px;top:411px;overflow:visible;" width="20" height="20" viewBox="0 0 20 20"><path d="M2.400 2h13.200l-1.400 14.200H3.800z" fill="#eef0f2" stroke="#a8acb0" stroke-width=".900"/><path d="M2.200 2.200h13.600" stroke="#9a9ea2" stroke-width="1.300"/><path d="M9 6l2 3.200h-1.300M11.800 10.500l-1.400 2.500H7.600M6.200 10.800L7.500 8.300" fill="none" stroke="#2f8fe8" stroke-width="1.500"/></svg>
<div style="left:906px;top:459px;width:14px;height:14px;border-radius:50%;background:conic-gradient(from 30deg,#d2d2d2,#f4f4f4,#cfcfcf,#ececec,#d2d2d2);box-shadow:0 0 0 .500px #d8d8d8"></div>
<svg width="0" height="0" style="left:0;top:0"><defs><linearGradient id="fb" x1="0" x2="1" y1="0" y2="0"><stop offset="0" stop-color="#eecb66"/><stop offset=".35" stop-color="#f3d271"/><stop offset="1" stop-color="#fcdf82"/></linearGradient><linearGradient id="ff" x1="0" x2="1" y1="0" y2="0"><stop offset="0" stop-color="#fde595"/><stop offset=".3" stop-color="#ffeaa4"/><stop offset="1" stop-color="#fbdf88"/></linearGradient><linearGradient id="dsk" x1="0" x2="1" y1="1" y2="0"><stop offset="0" stop-color="#0a8fee"/><stop offset=".5" stop-color="#12a2f4"/><stop offset="1" stop-color="#0b8ce8"/></linearGradient></defs></svg>
<svg style="left:1182px;top:114px;" width="58" height="86" viewBox="0 0 58 86"><path d="M1 1.200H50V43.300L55 47.500V69.700H1z" fill="url(#fb)"/><path d="M1 1.200L19 15.500V59.500L17.800 60V82.200L1 70.200z" fill="url(#ff)"/><path d="M18 82l5-4-5 1z" fill="#ddd" opacity=".6"/><path d="M55 69.700l6-3.200-6 1z" fill="#ddd" opacity=".6"/></svg>
<svg style="left:1359px;top:114px;" width="58" height="86" viewBox="0 0 58 86"><path d="M1 1.200H50V43.300L55 47.500V69.700H1z" fill="url(#fb)"/><path d="M1 1.200L19 15.500V59.500L17.800 60V82.200L1 70.200z" fill="url(#ff)"/><path d="M18 82l5-4-5 1z" fill="#ddd" opacity=".6"/><path d="M55 69.700l6-3.200-6 1z" fill="#ddd" opacity=".6"/></svg>
<svg style="left:1536px;top:114px;" width="58" height="86" viewBox="0 0 58 86"><path d="M1 1.200H50V43.300L55 47.500V69.700H1z" fill="url(#fb)"/><path d="M1 1.200L19 15.500V59.500L17.800 60V82.200L1 70.200z" fill="url(#ff)"/><path d="M18 82l5-4-5 1z" fill="#ddd" opacity=".6"/><path d="M55 69.700l6-3.200-6 1z" fill="#ddd" opacity=".6"/></svg>
<svg style="left:1713px;top:114px;" width="58" height="86" viewBox="0 0 58 86"><path d="M1 1.200H50V43.300L55 47.500V69.700H1z" fill="url(#fb)"/><path d="M1 1.200L19 15.500V59.500L17.800 60V82.200L1 70.200z" fill="url(#ff)"/><path d="M18 82l5-4-5 1z" fill="#ddd" opacity=".6"/><path d="M55 69.700l6-3.200-6 1z" fill="#ddd" opacity=".6"/></svg>
<svg style="left:1182px;top:245px;" width="58" height="86" viewBox="0 0 58 86"><path d="M1 1.200H50V43.300L55 47.500V69.700H1z" fill="url(#fb)"/><path d="M1 1.200L19 15.500V59.500L17.800 60V82.200L1 70.200z" fill="url(#ff)"/><path d="M18 82l5-4-5 1z" fill="#ddd" opacity=".6"/><path d="M55 69.700l6-3.200-6 1z" fill="#ddd" opacity=".6"/></svg>
<svg style="left:1359px;top:245px;" width="58" height="86" viewBox="0 0 58 86"><path d="M1 1.200H50V43.300L55 47.500V69.700H1z" fill="url(#fb)"/><path d="M1 1.200L19 15.500V59.500L17.800 60V82.200L1 70.200z" fill="url(#ff)"/><path d="M18 82l5-4-5 1z" fill="#ddd" opacity=".6"/><path d="M55 69.700l6-3.200-6 1z" fill="#ddd" opacity=".6"/></svg>
<svg style="left:1536px;top:245px;" width="58" height="86" viewBox="0 0 58 86"><path d="M1 1.200H50V43.300L55 47.500V69.700H1z" fill="url(#fb)"/><path d="M1 1.200L19 15.500V59.500L17.800 60V82.200L1 70.200z" fill="url(#ff)"/><path d="M18 82l5-4-5 1z" fill="#ddd" opacity=".6"/><path d="M55 69.700l6-3.200-6 1z" fill="#ddd" opacity=".6"/></svg>
<svg style="left:1713px;top:245px;" width="58" height="86" viewBox="0 0 58 86"><path d="M1 1.200H50V43.300L55 47.500V69.700H1z" fill="url(#fb)"/><path d="M1 1.200L19 15.500V59.500L17.800 60V82.200L1 70.200z" fill="url(#ff)"/><path d="M18 82l5-4-5 1z" fill="#ddd" opacity=".6"/><path d="M55 69.700l6-3.200-6 1z" fill="#ddd" opacity=".6"/></svg>
<svg style="left:1182px;top:375px;" width="58" height="86" viewBox="0 0 58 86"><path d="M1 1.200H50V43.300L55 47.500V69.700H1z" fill="url(#fb)"/><path d="M1 1.200L19 15.500V59.500L17.800 60V82.200L1 70.200z" fill="url(#ff)"/><path d="M18 82l5-4-5 1z" fill="#ddd" opacity=".6"/><path d="M55 69.700l6-3.200-6 1z" fill="#ddd" opacity=".6"/></svg>
<div style="left:1531px;top:201px;width:74px;height:21px;background:#cce8ff"></div>
<span class="t" style="left:1169.17px;top:201.50px;font-size:17px;color:#868686;transform:scaleX(0.7910);transform-origin:50% 50%;">Applications</span>
<span class="t" style="left:1360.62px;top:201.50px;font-size:17px;color:#868686;transform:scaleX(0.7537);transform-origin:50% 50%;">Desktop</span>
<span class="t" style="left:1526.31px;top:201.50px;font-size:17px;color:#fff;transform:scaleX(0.7619);transform-origin:50% 50%;">Documents</span>
<span class="t" style="left:1703.75px;top:201.50px;font-size:17px;color:#868686;transform:scaleX(0.7432);transform-origin:50% 50%;">Downloads</span>
<span class="t" style="left:1191.80px;top:332.50px;font-size:17px;color:#868686;transform:scaleX(0.7603);transform-origin:50% 50%;">Music</span>
<span class="t" style="left:1361.40px;top:332.50px;font-size:17px;color:#868686;transform:scaleX(0.7768);transform-origin:50% 50%;">Pictures</span>
<span class="t" style="left:1545.15px;top:332.50px;font-size:17px;color:#868686;transform:scaleX(0.7775);transform-origin:50% 50%;">Public</span>
<span class="t" style="left:1707.06px;top:332.50px;font-size:17px;color:#868686;transform:scaleX(0.7602);transform-origin:50% 50%;">Templates</span>
<span class="t" style="left:1188.77px;top:462.50px;font-size:17px;color:#868686;transform:scaleX(0.7403);transform-origin:50% 50%;">Videos</span>
<svg style="left:1383px;top:153px;" width="51" height="36" viewBox="0 0 51 36"><rect x="0" y="0" width="51" height="36" fill="url(#dsk)"/><path d="M22 36L34 0H44L32 36z" fill="#fff" opacity=".08"/><rect x="0" y="34.500" width="51" height="1.500" fill="#0a6fc4"/></svg>
<svg style="left:1562px;top:133px;" width="42" height="57" viewBox="0 0 42 57"><path d="M.500 .500H30L41.500 12V56.500H.500z" fill="#f7f8f9" stroke="#c9cdd2" stroke-width="1"/><path d="M30 .500V12H41.500z" fill="#e3e6ea" stroke="#c9cdd2" stroke-width=".800"/><text x="4" y="18" font-family="'Liberation Serif',serif" font-style="italic" font-size="17" fill="#1f7fd8">A</text><path d="M18 7h10M18 11h17M18 15h19" stroke="#8cc4f0" stroke-width="1"/><path d="M4 22h34" stroke="#3b8fe0" stroke-width="1.300"/><path d="M4 27h17M4 31h17M4 35h17M4 39h34M4 43h34M4 47h34M4 51h34" stroke="#c4c8cc" stroke-width=".900"/><rect x="24" y="26" width="14" height="10" fill="#5a8fb8"/><path d="M24 33l5-3 9 2v4H24z" fill="#2f5a48"/></svg>
<svg style="left:1740px;top:144px;" width="46" height="45" viewBox="0 0 46 45"><path d="M15 0H31V23H45.500L23 45L.500 23H15z" fill="#3b97e3"/></svg>
<svg style="left:1204px;top:255px;" width="52" height="72" viewBox="0 0 52 72"><path d="M28.100 5a2.500 2.500 0 0 1 5 0C34 10 35 13 36.800 15.800C39 19 42 20.500 44.300 22.500C47.500 26 49 30 48.500 35C48 40 46 46 42.700 50.400L41.400 49.600C44 45 45.500 41 44.750 38.300C44 33 40 27 33.100 23.750V60H28.100z" fill="#0a90ea"/><ellipse cx="19.300" cy="59.600" rx="14.600" ry="9.800" fill="#0a90ea" transform="rotate(-24 19.300 59.600)"/><path d="M6 62C6 56 14 50 24 49.500C27 49.400 29 50 30.500 51C22 53 12 60 8.500 67C7 66 6 64 6 62z" fill="#06a6f7"/></svg>
<svg style="left:1383px;top:282px;" width="51" height="39" viewBox="0 0 51 39"><rect x=".500" y=".600" width="50" height="38" fill="#fff" stroke="#cfcfcf"/><rect x="2.200" y="2.300" width="46.800" height="34.500" fill="#d6eafb"/><rect x="2.200" y="2.300" width="46.800" height="7.500" fill="#72a7f8"/><path d="M2.200 11c3-2 6-3 9-2c2 1 3 2 5 2c3-1 8-1 12-.500c5 .500 10 0 20.800 1v-3H2.200z" fill="#8fc0f6"/><path d="M2.200 15.500c5 .500 10 1 14 2.500c4 2 6 5.500 10 7l23 2.500v2H2.200z" fill="#5f9480"/><path d="M2.200 21c3-2 6-1.500 9 .500s6 3.500 10 4l27.800 1.500v2H2.200z" fill="#2f7048"/><path d="M27 24c3-2 7-2 10-.500s6 2.500 12 3.500H27z" fill="#8fc4ea"/><path d="M2.200 22.500l6 4h8l4 2.500h-18z" fill="#38464e"/><rect x="2.200" y="28.500" width="46.800" height="8.300" fill="url(#wat)"/><defs><linearGradient id="wat" x1="0" x2="1" y1="0" y2="0"><stop offset="0" stop-color="#3f78b0"/><stop offset=".5" stop-color="#6fa6cc"/><stop offset="1" stop-color="#a4d0ea"/></linearGradient></defs></svg>
<svg style="left:1556px;top:286px;overflow:visible;" width="58" height="36" viewBox="0 0 58 36"><clipPath id="ccl"><circle cx="7.3" cy="25" r="6.6" /><circle cx="15.7" cy="13.5" r="7.6" /><circle cx="31.5" cy="12.2" r="10.7" /><rect x="7" y="13" width="28" height="18.500"/></clipPath><g fill="#0b45ab"><circle cx="7.3" cy="25" r="6.6" /><circle cx="15.7" cy="13.5" r="7.6" /><circle cx="31.5" cy="12.2" r="10.7" /><rect x="7" y="13" width="28" height="18.500"/></g><g clip-path="url(#ccl)"><g fill="#f3d271" stroke="#f3d271" stroke-width="2.800"><circle cx="19.4" cy="27.2" r="6.7" /><circle cx="29.8" cy="18" r="9.6" /><circle cx="43.2" cy="21.2" r="7.1" /><circle cx="50.2" cy="28.3" r="5.6" /><rect x="19" y="22" width="32" height="12" rx="2"/></g></g><g fill="#0b45ab"><circle cx="19.4" cy="27.2" r="6.7" /><circle cx="29.8" cy="18" r="9.6" /><circle cx="43.2" cy="21.2" r="7.1" /><circle cx="50.2" cy="28.3" r="5.6" /><rect x="19" y="22" width="32" height="12" rx="2"/></g></svg>
<svg style="left:1742px;top:270px;" width="40" height="52" viewBox="0 0 40 52"><path d="M5.100 1.500H38V34.600L27.600 25C22 30 18 33 16.300 35.800C14 40 14.500 46 20.100 50.400C16 50.200 13.500 49 11.300 47.500C7 44.500 3 39 1.750 32.500C1.500 28 2.500 25.500 4.700 23.300C8 20 11.500 15.500 14.700 12.100z" fill="#3b97e3"/></svg>
<svg style="left:1205.8px;top:398.2px;" width="47.1" height="51.8" viewBox="0 0 47.1 51.8"><defs><clipPath id="fr1"><rect x="7.900" y="1.600" width="30.500" height="23.500"/></clipPath><clipPath id="fr2"><rect x="7.900" y="26.400" width="30.500" height="24.100"/></clipPath></defs><rect x="0" y="0" width="6.500" height="51.800" fill="#5a5a5a" opacity=".78"/><rect x="40" y="0" width="7.100" height="51.800" fill="#6a6a6a" opacity=".85"/><rect x="6.300" y="0" width="33.900" height="51.800" fill="#22262a"/><g clip-path="url(#fr1)"><rect x="7.900" y="1.600" width="30.500" height="23.500" fill="#3b82d8"/><rect x="20.500" y="20.500" width="18" height="4.600" fill="#2f6a3a"/><circle cx="11.700" cy="18" r="7.700" fill="#f2c038"/><path d="M4 15.500l3.500-2.500 3 3 3-4 3 4 3-2.500v4H4z" fill="#a8d4ee"/><path d="M4 19l3-2.500 3 3.500 3-4.500 3 4.500 3.500-3v5H4z" fill="#7a3fc0"/><path d="M4 22l4-1.500 3 2 3-2.500 3 2.500 2.500-1.500v4.500H4z" fill="#e8382c"/><ellipse cx="29.600" cy="14.300" rx="7.600" ry="8" fill="#e03a28"/><path d="M25.500 7.500c-2 4-2 9 0 13.500M33.700 7.500c2 4 2 9 0 13.500" stroke="#f5c828" stroke-width="2.600" fill="none"/><path d="M27.800 6.500c-1 5-1 10.500.500 15.500M31.400 6.500c1 5 1 10.500-.500 15.500" stroke="#1a1a1a" stroke-width="1.500" fill="none"/><path d="M29.600 8l1.800 3.500h-3.600zM29.600 13l1.800 3.500h-3.600z" fill="#f5c828"/><path d="M27.500 21.500h4.200l-1 3.500h-2.200z" fill="#111"/></g><g clip-path="url(#fr2)"><rect x="7.900" y="26.400" width="30.500" height="24.100" fill="#3b82d8"/><path d="M24.500 26.400h14l-5 7.500h-4z" fill="#3a2a1a"/><path d="M27 26.400h3l-1 4zM33 26.400h3l-3 4z" fill="#d8a030"/><ellipse cx="31.700" cy="32.500" rx="3" ry="1.800" fill="#111"/><rect x="31" y="35.500" width="2" height="2" fill="#8a4a20"/><ellipse cx="29.600" cy="49.500" rx="7.600" ry="8" fill="#e03a28"/><path d="M25.500 43c-2 4-2 9 0 13.500M33.700 43c2 4 2 9 0 13.500" stroke="#f5c828" stroke-width="2.600" fill="none"/><path d="M27.800 42c-1 5-1 10 .500 15M31.400 42c1 5 1 10-.500 15" stroke="#1a1a1a" stroke-width="1.500" fill="none"/><circle cx="10.500" cy="52" r="8" fill="#f2c038"/><path d="M4 50l4-3 3.500 2.500 3-2 3 3.500v3H4z" fill="#a8d4ee"/></g><rect x="1.300" y="1.8" width="3.700" height="3" fill="#f1dc90"/><rect x="42.100" y="1.8" width="3.800" height="3" fill="#f4f4f4"/><rect x="1.300" y="8.05" width="3.700" height="3" fill="#f1dc90"/><rect x="42.100" y="8.05" width="3.800" height="3" fill="#f4f4f4"/><rect x="1.300" y="14.7" width="3.700" height="3" fill="#f1dc90"/><rect x="42.100" y="14.7" width="3.800" height="3" fill="#f4f4f4"/><rect x="1.300" y="21" width="3.700" height="3" fill="#f1dc90"/><rect x="42.100" y="21" width="3.800" height="3" fill="#f4f4f4"/><rect x="1.300" y="27.6" width="3.700" height="3" fill="#f1dc90"/><rect x="42.100" y="27.6" width="3.800" height="3" fill="#f4f4f4"/><rect x="1.300" y="34.3" width="3.700" height="3" fill="#f1dc90"/><rect x="42.100" y="34.3" width="3.800" height="3" fill="#f4f4f4"/><rect x="1.300" y="41" width="3.700" height="3" fill="#f1dc90"/><rect x="42.100" y="41" width="3.800" height="3" fill="#f4f4f4"/><rect x="1.300" y="47.2" width="3.700" height="3" fill="#f1dc90"/><rect x="42.100" y="47.2" width="3.800" height="3" fill="#f4f4f4"/></svg>
<div class="win" style="left:889px;top:518px;width:950px;height:473px;"></div>
<div style="left:889px;top:566px;width:950px;height:2px;background:#939393"></div>
<div style="left:889px;top:567px;width:175px;height:377px;background:#fbfbfb"></div>
<div style="left:889px;top:567px;width:175px;height:47px;background:#cce8ff"></div>
<div style="left:1064px;top:568px;width:1px;height:376px;background:#dcdcdc"></div>
<div style="left:1065px;top:613px;width:774px;height:331px;background:#fafafa"></div>
<div class="btng" style="left:895px;top:524px;width:34px;height:36px"></div>
<svg style="left:904px;top:534px;" width="16" height="16" viewBox="0 0 16 16"><circle cx="9.600" cy="6.300" r="4.600" fill="none" stroke="#7a7a7a" stroke-width="1.900"/><path d="M6.400 9.600L2 14" stroke="#7a7a7a" stroke-width="2.100" stroke-linecap="round"/></svg>
<div class="btng" style="left:947px;top:524px;width:103px;height:36px"></div>
<span class="t" style="left:958.20px;top:531.50px;font-size:17px;color:#868686;transform:scaleX(0.7615);transform-origin:0 50%;">Categories</span>
<svg style="left:1025px;top:536px;" width="13" height="13" viewBox="0 0 13 13"><path d="M6.500 1V11.500M1.800 7L6.500 11.700L11.200 7" fill="none" stroke="#7a7a7a" stroke-width="1.600"/></svg>
<div class="btng" style="left:1182px;top:525px;width:364px;height:34px"></div>
<div style="left:1183px;top:526px;width:120px;height:32px;background:#efefef"></div>
<div style="left:1303px;top:525px;width:1px;height:34px;background:#b4b4b4"></div>
<div style="left:1424px;top:525px;width:1px;height:34px;background:#b4b4b4"></div>
<span class="t" style="left:1233.35px;top:531.50px;font-size:17px;color:#868686;transform:scaleX(0.8310);transform-origin:50% 50%;">All</span>
<span class="t" style="left:1331.84px;top:531.50px;font-size:17px;color:#868686;transform:scaleX(0.8055);transform-origin:50% 50%;">Installed</span>
<span class="t" style="left:1452.84px;top:531.50px;font-size:17px;color:#868686;transform:scaleX(0.7423);transform-origin:50% 50%;">Updates</span>
<div class="btng" style="left:1700px;top:524px;width:34px;height:36px"></div>
<svg style="left:1711px;top:536px;" width="12" height="12" viewBox="0 0 12 12"><path d="M1 1.500h10M1 6h10M1 10.500h10" stroke="#7a7a7a" stroke-width="1.700"/></svg>
<div style="left:1740px;top:524px;width:1px;height:36px;background:#e0e0e0"></div>
<div style="left:1762px;top:542px;width:11px;height:1px;background:#8a8a8a"></div>
<svg style="left:1807px;top:536px;" width="13" height="13" viewBox="0 0 13 13"><path d="M1 1.400L12 11.800M12 1.400L1 11.800" stroke="#6a6a6a" stroke-width="1.100"/></svg>
<span class="t" style="left:902.70px;top:580.50px;font-size:17px;color:#fff;transform:scaleX(0.7540);transform-origin:0 50%;">Featured</span>
<span class="t" style="left:902.70px;top:627.50px;font-size:17px;color:#868686;transform:scaleX(0.7502);transform-origin:0 50%;">Photo &amp; Video</span>
<span class="t" style="left:902.70px;top:674.50px;font-size:17px;color:#868686;transform:scaleX(0.7668);transform-origin:0 50%;">Music &amp; Audio</span>
<span class="t" style="left:902.70px;top:720.50px;font-size:17px;color:#868686;transform:scaleX(0.8001);transform-origin:0 50%;">Productivity</span>
<span class="t" style="left:902.70px;top:768.50px;font-size:17px;color:#868686;transform:scaleX(0.7542);transform-origin:0 50%;">Communication &amp; News</span>
<span class="t" style="left:902.70px;top:815.50px;font-size:17px;color:#868686;transform:scaleX(0.7478);transform-origin:0 50%;">Education &amp; Science</span>
<span class="t" style="left:902.70px;top:862.50px;font-size:17px;color:#868686;transform:scaleX(0.6899);transform-origin:0 50%;">Games</span>
<span class="t" style="left:902.70px;top:909.50px;font-size:17px;color:#868686;transform:scaleX(0.8561);transform-origin:0 50%;">Utilities</span>
<span class="t" style="left:1687.00px;top:579.50px;font-size:17px;color:#868686;transform:scaleX(0.7465);transform-origin:0 50%;">Sort by</span>
<div class="btng" style="left:1733px;top:573px;width:100px;height:34px"></div>
<span class="t" style="left:1744.20px;top:579.50px;font-size:17px;color:#868686;transform:scaleX(0.7395);transform-origin:0 50%;">Relevance</span>
<svg style="left:1811px;top:586px;" width="10" height="7" viewBox="0 0 10 7"><path d="M1 1.200L5 5.200L9 1.200" fill="none" stroke="#999" stroke-width="1.200"/></svg>
<div style="left:1065px;top:612px;width:774px;height:1px;background:#e2e2e2"></div>
<div style="left:1065px;top:698px;width:774px;height:1px;background:#e2e2e2"></div>
<div style="left:1065px;top:784px;width:774px;height:1px;background:#e2e2e2"></div>
<div style="left:1065px;top:870px;width:774px;height:1px;background:#e2e2e2"></div>
<div style="left:1065px;top:613px;width:774px;height:331px;overflow:hidden">
<span class="t" style="left:92.40px;top:7.50px;font-size:17px;color:#868686;transform:scaleX(0.7270);transform-origin:0 50%;font-weight:bold;">Firefox</span>
<span class="t" style="left:238.60px;top:7.50px;font-size:17px;color:#868686;transform:scaleX(0.7311);transform-origin:0 50%;font-weight:bold;">70.0.1-1</span>
<span class="t" style="left:92.40px;top:32.50px;font-size:17px;color:#868686;transform:scaleX(0.7555);transform-origin:0 50%;">Browse the World Wide Web</span>
<span class="t" style="left:92.40px;top:57.50px;font-size:17px;color:#868686;transform:scaleX(0.7647);transform-origin:0 50%;">extra</span>
<div style="left:644px;top:8px;width:110px;height:34px;background:#cc0000"></div>
<span class="t" style="left:667.25px;top:14.50px;font-size:17px;color:#ff1f1f;transform:scaleX(0.7220);transform-origin:50% 50%;">Remove</span>
<span class="t" style="left:662.62px;top:47.50px;font-size:17px;color:#868686;transform:scaleX(0.7559);transform-origin:50% 50%;">199,4 MB</span>
<span class="t" style="left:92.40px;top:93.50px;font-size:17px;color:#868686;transform:scaleX(0.7107);transform-origin:0 50%;font-weight:bold;">Arduino IDE</span>
<span class="t" style="left:238.60px;top:93.50px;font-size:17px;color:#868686;transform:scaleX(0.7364);transform-origin:0 50%;font-weight:bold;">1:1.8.9-3</span>
<span class="t" style="left:92.40px;top:118.50px;font-size:17px;color:#868686;transform:scaleX(0.7842);transform-origin:0 50%;">Open-source electronics prototyping platform</span>
<span class="t" style="left:92.40px;top:143.50px;font-size:17px;color:#868686;transform:scaleX(0.8031);transform-origin:0 50%;">community</span>
<div style="left:644px;top:94px;width:110px;height:34px;background:#cce8ff"></div>
<span class="t" style="left:667.35px;top:133.50px;font-size:17px;color:#868686;transform:scaleX(0.7535);transform-origin:50% 50%;">29,9 MB</span>
<span class="t" style="left:92.40px;top:179.50px;font-size:17px;color:#868686;transform:scaleX(0.7268);transform-origin:0 50%;font-weight:bold;">Blender</span>
<span class="t" style="left:238.60px;top:179.50px;font-size:17px;color:#868686;transform:scaleX(0.7352);transform-origin:0 50%;font-weight:bold;">17:2.80-7</span>
<span class="t" style="left:92.40px;top:204.50px;font-size:17px;color:#868686;transform:scaleX(0.7871);transform-origin:0 50%;">3D modeling, animation, rendering and post-production</span>
<span class="t" style="left:92.40px;top:229.50px;font-size:17px;color:#868686;transform:scaleX(0.8031);transform-origin:0 50%;">community</span>
<div style="left:644px;top:180px;width:110px;height:34px;background:#cce8ff"></div>
<span class="t" style="left:662.62px;top:219.50px;font-size:17px;color:#868686;transform:scaleX(0.7559);transform-origin:50% 50%;">228,0 MB</span>
<span class="t" style="left:92.40px;top:265.50px;font-size:17px;color:#868686;transform:scaleX(0.6842);transform-origin:0 50%;font-weight:bold;">Cura</span>
<span class="t" style="left:238.60px;top:265.50px;font-size:17px;color:#868686;transform:scaleX(0.7370);transform-origin:0 50%;font-weight:bold;">4.3.0-1</span>
<span class="t" style="left:92.40px;top:290.50px;font-size:17px;color:#868686;transform:scaleX(0.7616);transform-origin:0 50%;">The world's most advanced 3d printer software</span>
<span class="t" style="left:92.40px;top:315.50px;font-size:17px;color:#868686;transform:scaleX(0.8031);transform-origin:0 50%;">community</span>
<div style="left:644px;top:266px;width:110px;height:34px;background:#cce8ff"></div>
<span class="t" style="left:667.35px;top:305.50px;font-size:17px;color:#868686;transform:scaleX(0.7535);transform-origin:50% 50%;">90,9 MB</span>
</div>
<div style="left:889px;top:942px;width:950px;height:1px;background:repeating-linear-gradient(90deg,#c4c4c4 0 6px,transparent 6px 10px)"></div>
<div style="left:889px;top:944px;width:950px;height:1px;background:#e0e0e0"></div>
<div class="btng" style="left:1611px;top:951px;width:85px;height:34px;background:#fafafa"></div>
<div class="btng" style="left:1702px;top:951px;width:85px;height:34px;background:#fafafa"></div>
<span class="t" style="left:1626.64px;top:957.50px;font-size:17px;color:#868686;transform:scaleX(0.7446);transform-origin:50% 50%;">Cancel</span>
<span class="t" style="left:1722.74px;top:957.50px;font-size:17px;color:#868686;transform:scaleX(0.7525);transform-origin:50% 50%;">Apply</span>
<svg style="left:1809px;top:962px;" width="14" height="12" viewBox="0 0 14 12"><path d="M1 6h11.500M7.800 1.500L12.500 6L7.800 10.500" fill="none" stroke="#7a7a7a" stroke-width="1.500"/></svg>
<svg width="0" height="0" style="left:0;top:0"><defs><linearGradient id="fx1" x1=".5" y1=".1" x2=".4" y2="1"><stop offset="0" stop-color="#ff9a2e"/><stop offset=".35" stop-color="#ff6a3a"/><stop offset=".7" stop-color="#ff3c42"/><stop offset="1" stop-color="#e01a72"/></linearGradient><linearGradient id="fx2" x1=".6" y1="0" x2=".35" y2="1"><stop offset="0" stop-color="#a044e8"/><stop offset=".5" stop-color="#8048e8"/><stop offset="1" stop-color="#5a46c8"/></linearGradient><linearGradient id="fx3" x1="0" y1="0" x2="1" y2="1"><stop offset="0" stop-color="#ffbd4f"/><stop offset="1" stop-color="#ff7139"/></linearGradient></defs></svg>
<svg style="left:1093px;top:626px;" width="56" height="56" viewBox="0 0 56 56"><path d="M34.200 6.200C38 10 42 13 43 15.500L44.500 19.500C47.500 22.500 49 26 49 29.500C49 41 40 50 28 50S7 41 7 29.500C7 24 9 19 12 16L14.800 13.500L16.500 17.500L20.500 15L21.500 19.500C24 18 26 17.500 27.500 16.500C28 12 31 8.500 34.200 6.200z" fill="url(#fx1)"/><path d="M27.500 16.500C28 12 31 8.500 34.200 6.200C38 10 42 13 43 15.500L44.500 19.500C47.500 22.500 49 26 49 29.500C48.500 33 47 35 45 36C41 34 38 30 37 25C35.500 21 32 18 27.500 16.500z" fill="#ffd53d"/><path d="M46 38C42 36 39.500 32.500 40 27.500C42 29 44 28 45.500 25.500C48 28 48.500 33 46 38z" fill="#f9a72d"/><ellipse cx="28" cy="28.300" rx="9.300" ry="10.300" fill="url(#fx2)"/><path d="M22 20C25 17.500 31 17 35.500 20.500L37 22.800C35 22 33 22.300 32 23.500C33.500 24.200 34.500 25.500 34.800 27C31 25 26 26 23 29z" fill="#b441e4"/><path d="M8.500 23C9.500 20 10.500 18 12 16L14.800 13.500L16.500 17.500L20.500 15L21.500 19.500C23.500 22.500 25.500 24 28 24.800C25 25.500 22 26.500 20.500 28.500C18.500 31 19 34 21 36.500C15 35 10 30 8.500 23z" fill="#f7a02a"/><path d="M12 16L14.800 13.500L16.500 17.500L20.500 15L21.500 19.500C18 19 14.500 20 12 23z" fill="#f08c1a"/></svg>
<svg style="left:1098px;top:717px;" width="46" height="47" viewBox="0 0 46 47"><circle cx="23" cy="23.400" r="22.500" fill="#00979c"/><path d="M23 23.400c-3-4.500-5.500-6-8.500-6a6 6 0 0 0 0 12c3 0 5.500-1.500 8.500-6c3-4.500 5.500-6 8.500-6a6 6 0 0 1 0 12c-3 0-5.500-1.500-8.500-6z" fill="none" stroke="#fff" stroke-width="2.800"/><path d="M12 23.400h4.600M29.500 23.400h4.600M31.800 21.100v4.600" stroke="#fff" stroke-width="1.500"/></svg>
<svg style="left:1096px;top:808px;" width="50" height="42" viewBox="0 0 50 42"><path d="M2.800 30.900L22 16.500H10.500" fill="none" stroke="#e87d0d" stroke-width="5" stroke-linecap="round" stroke-linejoin="round"/><path d="M24.600 5L38 15" fill="none" stroke="#e87d0d" stroke-width="5" stroke-linecap="round"/><path d="M10.500 13h16" stroke="#e87d0d" stroke-width="5" stroke-linecap="round"/><ellipse cx="32" cy="23.800" rx="16.300" ry="15.600" fill="#e87d0d"/><ellipse cx="31.500" cy="23.300" rx="10.300" ry="9.300" fill="#fff"/><ellipse cx="31.700" cy="23.300" rx="7.200" ry="6.500" fill="#17467e"/></svg>
<svg style="left:1097px;top:889px;" width="48" height="48" viewBox="0 0 48 48"><path d="M16 0H48V31.500L32 47.500H0V16z" fill="#0ca4e4"/><path d="M37 14H24.500a9.500 9.500 0 0 0 0 19H37" fill="none" stroke="#fff" stroke-width="6.700"/></svg>
<div style="left:0px;top:1032px;width:1918px;height:48px;background:#020409"></div>
<div style="left:1911px;top:1032px;width:1px;height:48px;background:#3a3d42"></div>
<div style="left:461px;top:1032px;width:56px;height:48px;background:#3a3d42"></div>
<div style="left:61px;top:1077px;width:56px;height:3px;background:#3997cb"></div>
<div style="left:141px;top:1077px;width:56px;height:3px;background:#3997cb"></div>
<div style="left:221px;top:1077px;width:56px;height:3px;background:#3997cb"></div>
<div style="left:461px;top:1077px;width:56px;height:3px;background:#3997cb"></div>
<div style="left:541px;top:1077px;width:56px;height:3px;background:#3997cb"></div>
<div style="left:183px;top:1077px;width:14px;height:3px;background:#2a3f52"></div>
<svg style="left:11px;top:1042px;" width="27" height="26" viewBox="0 0 27 26"><path d="M.700 4.200L11.300 2.700V12.300H.700zM12.700 2.500L26 .600V12.300H12.700zM.700 13.700H11.300V23.300L.700 21.800zM12.700 13.700H26V25.400L12.700 23.500z" fill="#fff"/></svg>
<svg style="left:65px;top:1031px;" width="48" height="48" viewBox="0 0 56 56"><path d="M34.200 6.200C38 10 42 13 43 15.500L44.500 19.500C47.500 22.500 49 26 49 29.500C49 41 40 50 28 50S7 41 7 29.500C7 24 9 19 12 16L14.800 13.500L16.500 17.500L20.500 15L21.500 19.500C24 18 26 17.500 27.500 16.500C28 12 31 8.500 34.200 6.200z" fill="url(#fx1)"/><path d="M27.500 16.500C28 12 31 8.500 34.200 6.200C38 10 42 13 43 15.500L44.500 19.500C47.500 22.500 49 26 49 29.500C48.500 33 47 35 45 36C41 34 38 30 37 25C35.500 21 32 18 27.500 16.500z" fill="#ffd53d"/><path d="M46 38C42 36 39.500 32.500 40 27.500C42 29 44 28 45.500 25.500C48 28 48.500 33 46 38z" fill="#f9a72d"/><ellipse cx="28" cy="28.300" rx="9.300" ry="10.300" fill="url(#fx2)"/><path d="M22 20C25 17.500 31 17 35.500 20.500L37 22.800C35 22 33 22.300 32 23.500C33.500 24.200 34.500 25.500 34.800 27C31 25 26 26 23 29z" fill="#b441e4"/><path d="M8.500 23C9.500 20 10.500 18 12 16L14.800 13.500L16.500 17.500L20.500 15L21.500 19.500C23.500 22.500 25.500 24 28 24.800C25 25.500 22 26.500 20.500 28.500C18.500 31 19 34 21 36.500C15 35 10 30 8.500 23z" fill="#f7a02a"/><path d="M12 16L14.800 13.500L16.500 17.500L20.500 15L21.500 19.500C18 19 14.500 20 12 23z" fill="#f08c1a"/></svg>
<svg style="left:151px;top:1040px;" width="36" height="32" viewBox="0 0 36 32"><path d="M1 3.500a1.500 1.500 0 0 1 1.500-1.500H12l2.500 3H33.500a1.500 1.500 0 0 1 1.500 1.500V27H1z" fill="#f5a623"/><path d="M1 8.500H35V27.500a1.500 1.500 0 0 1-1.500 1.500H2.500A1.500 1.500 0 0 1 1 27.500z" fill="#fdd55c"/><path d="M1 8.500H35V11H1z" fill="#fce38a"/><path d="M8 29V20.500a1.500 1.500 0 0 1 1.500-1.500h17a1.500 1.500 0 0 1 1.500 1.500V29h-5v-5.500h-10V29z" fill="#3b8fe0"/><rect x="13" y="23.500" width="10" height="2" fill="#f0c040"/></svg>
<svg style="left:234px;top:1038px;" width="32" height="37" viewBox="0 0 32 37"><path d="M6.400 4L27.700 8.200L28.900 9.700V31L27 33L6.400 28z" fill="#ececec"/><path d="M6.400 1.300L10 .800L28.900 7.200V9.700L27.700 8.200L6.400 4z" fill="#d6d6d6"/><path d="M6.400 5.600L27.700 9.900" stroke="#4e5257" stroke-width="1.300"/><path d="M22 9v23.500" stroke="#d0d0d0" stroke-width="3"/><circle cx="19.750" cy="17.800" r="4.300" fill="#f5a623"/><circle cx="14" cy="13.500" r="3" fill="#cfcfcf"/><path d="M1.800 12L18.900 17.800L18.500 34.900L2.250 29.900z" fill="#54585d"/><path d="M3.300 14L17.500 18.900L17.200 33L3.600 28.700z" fill="#8e9297"/><ellipse cx="10.600" cy="23.700" rx="6.200" ry="8" fill="#e3e3e3"/><path d="M10.600 15.700a6.200 8 0 0 1 5 12.500L10.600 23.700z" fill="#f6f6f6"/><path d="M10.600 31.700a6.200 8 0 0 1-5-12.500L10.600 23.700z" fill="#cdcdcd"/><ellipse cx="10.600" cy="23.700" rx="1.500" ry="1.900" fill="#9a9a9a"/></svg>
<svg style="left:309px;top:1038px;" width="38" height="37" viewBox="0 0 38 37"><path d="M34.300 12.800L36 13.500V29.900L34.500 30.500z" fill="#c8642a"/><path d="M32 6.500L34.300 5.300L35.600 29.900L27.700 34.100L26 32z" fill="#f0f0f0"/><path d="M33 8l-5.500 24.500" stroke="#c9d6e2" stroke-width=".900"/><path d="M14.300 2.800L32 6.500L26 32L8 27z" fill="#b4d6f0"/><path d="M14.300 2.800L32 6.500L29.500 16C22 18 15 15 11.500 9z" fill="#d2e8f8"/><path d="M16 14L26 32L8 27z" fill="#8fc0e6" opacity=".6"/><path d="M1.800 25.300L12.250 6.600L14.300 2.800L11 27.600z" fill="#6a9cc0"/><path d="M1.800 25.300L9 12.500L8.500 26.800z" fill="#2b5c84"/><path d="M4.500 20.500l3.500-6v4z" fill="#4f9a5a"/><path d="M1.800 25.300L27.700 34.100L26 32L8 27z" fill="#e8eef4"/><path d="M14.300 1.600L34 5.600" stroke="#9a9a9a" stroke-width="1.800" stroke-dasharray="1.100 .800"/></svg>
<svg style="left:393px;top:1040px;" width="32" height="32" viewBox="0 0 32 32"><rect x=".800" y=".800" width="30.400" height="30.400" rx="2.500" fill="#23272e" stroke="#b9bdc2" stroke-width="1.400"/><rect x="1.500" y="27.500" width="29" height="3" fill="#d0d3d7"/><path d="M5 7l4 2.800L5 12.600" fill="none" stroke="#fff" stroke-width="1.500"/><path d="M10.500 13h5" stroke="#fff" stroke-width="1.500"/></svg>
<svg style="left:468px;top:1036px;" width="42" height="42" viewBox="0 0 42 42"><path d="M35.09 16.73L39.05 17.41L39.05 24.59L35.09 25.27L33.98 27.94L36.30 31.22L31.22 36.30L27.94 33.98L25.27 35.09L24.59 39.05L17.41 39.05L16.73 35.09L14.06 33.98L10.78 36.30L5.70 31.22L8.02 27.94L6.91 25.27L2.95 24.59L2.95 17.41L6.91 16.73L8.02 14.06L5.70 10.78L10.78 5.70L14.06 8.02L16.73 6.91L17.41 2.95L24.59 2.95L25.27 6.91L27.94 8.02L31.22 5.70L36.30 10.78L33.98 14.06ZM27.99 21.00A6.99 6.99 0 1 0 14.01 21.00A6.99 6.99 0 1 0 27.99 21.00Z" fill="#f1f1f1" fill-rule="evenodd"/><circle cx="21" cy="21" r="9.500" fill="none" stroke="#dcdcdc" stroke-width="1.200"/></svg>
<svg style="left:548px;top:1038px;" width="40" height="36" viewBox="0 0 40 36"><path d="M13.200 2.600L37.800 10.700V26.600L13.200 18.500z" fill="#1873c4"/><path d="M14.400 4.500L36.600 11.800V24.500L14.400 17.200z" fill="#3fb2f3"/><path d="M20 6.300L30 9.600L18 17.800L14.400 16.600z" fill="#7fd0fa" opacity=".55"/><path d="M37.800 10.700l.800-.400v16l-.800.300z" fill="#9aa0a6"/><path d="M27 27l6 2.200-3 1.500" stroke="#c9ccd0" stroke-width="1.400" fill="none"/><path d="M2.600 19L12 16.500L27 21L17.500 24.500z" fill="#e6e6e6"/><path d="M2.600 19L17.500 24.500V34.500L2.600 28.500z" fill="#cfcfcf"/><path d="M17.500 24.500L27 21V30.500L17.500 34.500z" fill="#b2b2b2"/><path d="M7.500 18.300l6-1.500 8 2.500" stroke="#bdbdbd" stroke-width="1.300" fill="none"/><rect x="5.500" y="23" width="2.400" height="4.500" fill="#5a5a5a" transform="skewY(20) translate(0,-2)"/><rect x="12" y="25.400" width="2.400" height="4.500" fill="#5a5a5a" transform="skewY(20) translate(0,-4.400)"/></svg>
<svg style="left:1738px;top:1048px;" width="19" height="16" viewBox="0 0 19 16"><rect x="4.500" y="2" width="12.500" height="9" fill="none" stroke="#f2f2f2" stroke-width="1.300"/><rect x="1" y="2" width="5" height="4.500" fill="#04060b" stroke="#f2f2f2" stroke-width="1.100"/><path d="M3.500 6.500V13M8 14.800h8M12 11v3.800" stroke="#f2f2f2" stroke-width="1.300" fill="none"/><path d="M2.200 3.700l1 1 1.500-1.800" stroke="#f2f2f2" stroke-width=".700" fill="none"/></svg>
<svg style="left:1766px;top:1048px;" width="19" height="16" viewBox="0 0 19 16"><path d="M1 5.500h3L8 2v12L4 10.500H1z" fill="none" stroke="#f2f2f2" stroke-width="1.200" stroke-linejoin="round"/><path d="M10.300 5.500a3.500 3.500 0 0 1 0 5" fill="none" stroke="#f2f2f2" stroke-width="1.100"/><path d="M12.300 3.500a6.300 6.300 0 0 1 0 9" fill="none" stroke="#d0d0d0" stroke-width="1.100"/><path d="M14.300 1.800a8.800 8.800 0 0 1 0 12.400" fill="none" stroke="#888" stroke-width="1"/></svg>
<svg style="left:1795px;top:1047px;" width="17" height="17" viewBox="0 0 17 17"><path d="M5.200 4A6.300 6.300 0 1 0 11.800 4" fill="none" stroke="#f2f2f2" stroke-width="1.900"/><path d="M8.500 1v7" stroke="#f2f2f2" stroke-width="1.900"/></svg>
<svg style="left:1820px;top:1053px;" width="13" height="8" viewBox="0 0 13 8"><path d="M1 6.500L6.500 1.500L12 6.500" fill="none" stroke="#bdbdbd" stroke-width="1.300"/></svg>
<span class="t" style="left:1859.33px;top:1044.50px;font-size:15px;color:#fff;transform:scaleX(1.0604);transform-origin:50% 50%;">00:41</span>
</body></html>
